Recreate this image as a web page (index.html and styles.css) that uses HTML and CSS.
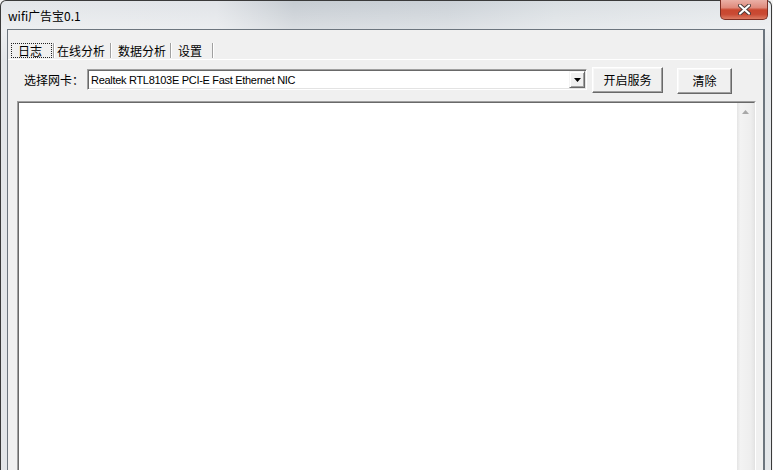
FILE: index.html
```html
<!DOCTYPE html>
<html lang="zh-CN">
<head>
    <meta charset="UTF-8">
    <title>wifi广告宝0.1</title>
    <link rel="stylesheet" href="styles.css">
</head>
<body>
    <div class="window">
        <div class="titlebar">
            <span class="title">wifi广告宝0.1</span>
            <button class="close-btn">
                <svg width="13" height="11" viewBox="0 0 13 11">
                    <path d="M2 1.5 L11 9.5 M11 1.5 L2 9.5" stroke="#4a3a38" stroke-width="4" stroke-linecap="round"/>
                    <path d="M2 1.5 L11 9.5 M11 1.5 L2 9.5" stroke="#fff" stroke-width="2.2" stroke-linecap="round"/>
                </svg>
            </button>
        </div>
        <div class="client">
            <div class="tabs">
                <span class="tab active"><span class="focus">日志</span></span>
                <span class="tab">在线分析</span>
                <span class="tab">数据分析</span>
                <span class="tab">设置</span>
            </div>
            <div class="toolbar">
                <label class="nic-label">选择网卡：</label>
                <div class="combo">
                    <span class="combo-text">Realtek RTL8103E PCI-E Fast Ethernet NIC</span>
                    <span class="drop-btn">
                        <svg width="7" height="4" viewBox="0 0 7 4"><path d="M0 0 H7 L3.5 4 Z" fill="#000"/></svg>
                    </span>
                </div>
                <button class="btn btn-start">开启服务</button>
                <button class="btn btn-clear">清除</button>
            </div>
            <div class="log">
                <div class="log-inner">
                    <div class="log-text"></div>
                    <div class="scrollbar">
                        <span class="scroll-up">
                            <svg width="7" height="4" viewBox="0 0 7 4"><path d="M3.5 0 L7 4 H0 Z" fill="#a8a8a8"/></svg>
                        </span>
                    </div>
                </div>
            </div>
        </div>
    </div>
</body>
</html>
```

FILE: styles.css
```css
body {
    margin: 0;
    background: #f4f4f4;
    font-family: "Noto Sans CJK SC", sans-serif;
    font-size: 12px;
    overflow: hidden;
}
.window {
    box-sizing: border-box;
    width: 772px;
    height: 480px;
    padding: 0 6px;
    border: 1px solid #3a3a3a;
    border-bottom: 0;
    border-radius: 6px 6px 0 0;
    background:
        linear-gradient(to bottom, rgba(255,255,255,0) 0, rgba(255,255,255,.35) 28px, rgba(255,255,255,0) 60px),
        linear-gradient(to right, #e3e6e9 0, #e1e4e8 28%, #c6ccd2 38%, #cbd1d7 58%, #d9dee2 72%, #e4e7ea 100%);
}
.titlebar {
    height: 28px;
    display: flex;
    align-items: center;
    justify-content: space-between;
}
.title {
    padding-left: 1px;
    color: #000;
}
.close-btn {
    align-self: flex-start;
    margin: -1px -3px 0 0;
    width: 48px;
    height: 20px;
    padding: 0;
    border: 1px solid #7d2e24;
    border-top: 0;
    border-radius: 0 0 5px 5px;
    background: linear-gradient(to bottom, #eab0a6 0, #df8a7c 40%, #c9472f 52%, #c94a34 75%, #dc7b63 100%);
    display: flex;
    align-items: center;
    justify-content: center;
}
.client {
    height: 460px;
    border: 1px solid #6c757e;
    border-right: 2px solid #6c757e;
    border-bottom: 0;
    background: #f0f0f0;
}
.tabs {
    box-sizing: border-box;
    height: 30px;
    padding: 13px 0 0 3px;
    border-bottom: 1px solid #fff;
    display: flex;
    align-items: flex-start;
}
.tab {
    height: 15px;
    line-height: 16px;
    padding: 0 4px 0 7px;
    border-right: 1px solid #a0a0a0;
    box-shadow: 1px 0 0 #fff;
    white-space: nowrap;
}
.tab.active {
    padding: 0 1px 0 0;
}
.tab:nth-child(2) {
    padding: 0 5px 0 3px;
}
.tab:last-child {
    padding-right: 10px;
}
.focus {
    display: block;
    height: 13px;
    line-height: 14px;
    padding: 0 9px 0 6px;
    border: 1px dotted #222;
}
.toolbar {
    height: 27px;
    margin-top: 6px;
    padding-left: 16px;
    display: flex;
    align-items: center;
}
.nic-label {
    width: 63px;
    white-space: nowrap;
}
.combo {
    box-sizing: border-box;
    width: 500px;
    height: 21px;
    padding: 1px;
    border: 1px solid;
    border-color: #a0a0a0 #fff #fff #a0a0a0;
    box-shadow: inset 1px 1px 0 #696969, inset -1px -1px 0 #e3e3e3;
    background: #fff;
    display: flex;
    align-items: stretch;
}
.combo-text {
    flex: 1;
    padding-left: 2px;
    font-family: "Liberation Sans", Arial, sans-serif;
    font-size: 11px;
    letter-spacing: -0.3px;
    line-height: 18px;
    color: #000;
}
.drop-btn {
    box-sizing: border-box;
    width: 16px;
    border: 1px solid;
    border-color: #f4f4f4 #696969 #696969 #f4f4f4;
    box-shadow: inset 1px 1px 0 #fff, inset -1px -1px 0 #a0a0a0;
    background: #f0f0f0;
    display: flex;
    align-items: center;
    justify-content: center;
}
.btn {
    box-sizing: border-box;
    height: 26px;
    padding: 0;
    border: 1px solid;
    border-color: #fff #696969 #696969 #fff;
    box-shadow: inset -1px -1px 0 #a0a0a0, inset 1px 1px 0 #f8f8f8;
    background: #f0f0f0;
    font-family: "Noto Sans CJK SC", sans-serif;
    font-size: 12px;
    color: #000;
}
.btn-start {
    width: 71px;
    margin-left: 5px;
}
.btn-clear {
    width: 55px;
    margin-left: 14px;
    margin-top: 2px;
}
.log {
    height: 380px;
    margin: 8px 7px 0 9px;
    border: 1px solid;
    border-color: #a0a0a0 #fff #fff #a0a0a0;
}
.log-inner {
    height: 100%;
    box-sizing: border-box;
    border: 1px solid;
    border-color: #696969 #e3e3e3 #e3e3e3 #696969;
    display: flex;
}
.log-text {
    flex: 1;
    background: #fff;
}
.scrollbar {
    width: 17px;
    background: linear-gradient(to right, #e4e4e4 0, #f3f3f3 20%, #eeeeee 80%, #e6e6e6 100%);
}
.scroll-up {
    height: 17px;
    display: flex;
    align-items: center;
    justify-content: center;
}
```
